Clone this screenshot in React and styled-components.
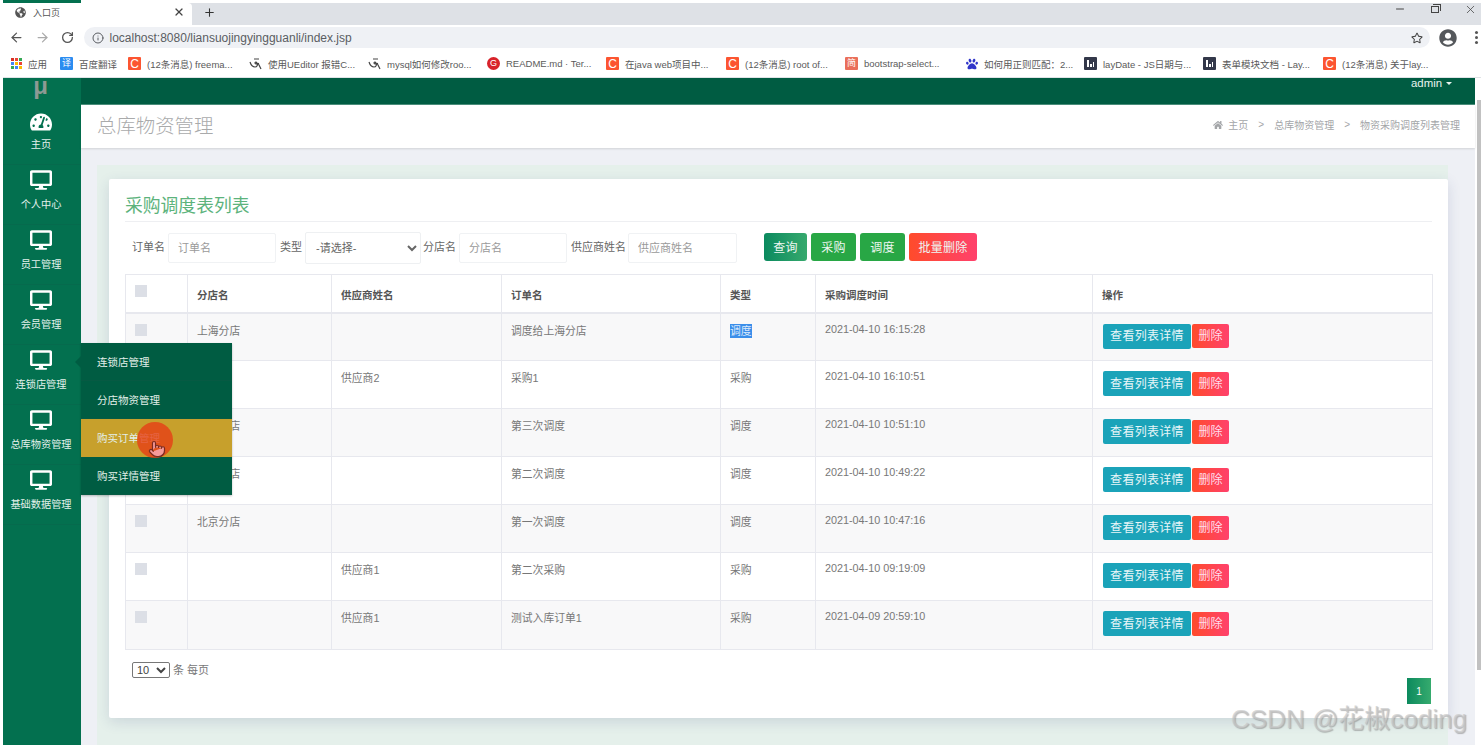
import React from "react";
import styled, { createGlobalStyle } from "styled-components";
import { FaTachometerAlt, FaDesktop, FaHome, FaPaw, FaGlobeAmericas, FaUserCircle, FaRegStar } from "react-icons/fa";
import { ArrowLeft, ArrowRight, RotateCw, Info, Plus, X, Minus, Pointer } from "lucide-react";

const Global = createGlobalStyle`
  html, body { margin: 0; padding: 0; background: #fff; overflow: hidden; }
  * { box-sizing: border-box; }
  body { font-family: "Liberation Sans", "Noto Sans CJK SC", sans-serif; }
`;

const Frame = styled.div`
  width: 1478px; height: 745px; margin-left: 3px; display: flex; flex-direction: column; overflow: hidden; position: relative; background: #fff;
`;
const Sliver = styled.div`height: 3px; width: 78px; background: #03704f; flex: none;`;
const TabStrip = styled.div`height: 22px; flex: none; display: flex; align-items: stretch; background: #dee1e6;`;
const Tab = styled.div`
  width: 189px; background: #fff; display: flex; align-items: center; padding: 0 7px 4px 12px; color: #555; font-size: 9px; gap: 7px; border-top-right-radius: 4px;
  span { flex: 1; }
`;
const NewTab = styled.div`width: 34px; display: flex; align-items: center; justify-content: center; color: #333; padding-bottom: 4px;`;
const WindowControls = styled.div`margin-left: auto; display: flex; align-items: flex-start; color: #444; gap: 25px; padding-right: 4px;`;
const RestoreIcon = styled.div`
  width: 8px; height: 7px; border: 1px solid #444; margin-top: 3px; position: relative;
  &::after { content: ""; position: absolute; left: 1px; top: -3px; width: 7px; height: 6px; border: 1px solid #444; border-left: 0; border-bottom: 0; }
`;
const Toolbar = styled.div`height: 25px; flex: none; display: flex; align-items: center; padding-left: 1px; background: #fff; color: #555;`;
const NavBtn = styled.div`width: 25.5px; display: flex; justify-content: center; color: ${p => p.$dim ? "#aaa" : "#555"};`;
const Address = styled.div`
  margin-left: 3px; width: 1346px; height: 21px; border-radius: 11px; background: #eff1f5; display: flex; align-items: center; padding: 0 7px 0 8px; gap: 6px; font-size: 12px; color: #5a5d62;
  span { flex: 1; }
`;
const Avatar = styled.div`margin-left: 3px; width: 30px; display: flex; justify-content: center; color: #55585c;`;
const Dots = styled.div`
  width: 3px; height: 3px; margin-left: 12px; border-radius: 50%; background: #555; box-shadow: 0 -5px #555, 0 5px #555;
`;
const BookmarkBar = styled.div`height: 28px; flex: none; display: flex; align-items: center; padding-left: 8px; background: #fff; border-bottom: 1px solid #dfe3e6;`;
const Bookmark = styled.div`
  width: ${p => p.$w}px; flex: none; display: flex; align-items: center; gap: 6px; font-size: 9.5px; color: #5a5a5a; white-space: nowrap; overflow: hidden;
`;
const Favicon = styled.div`
  width: 13px; height: 13px; flex: none; display: flex; align-items: center; justify-content: center; color: #fff; border-radius: ${p => p.$round ? "50%" : "1px"}; background: ${p => p.$bg}; font-size: ${p => p.$fs || 11}px; line-height: 1;
`;
const Body = styled.div`flex: 1; display: flex; position: relative; min-height: 0;`;
const Sidebar = styled.div`width: 78px; flex: none; background: #03704f; display: flex; flex-direction: column;`;
const Logo = styled.div`height: 27px; flex: none; padding-right: 3px; text-align: center; color: #8c9a94; font-size: 24px; font-weight: bold; line-height: 15px;`;
const NavItem = styled.div`
  height: 60px; flex: none; display: flex; flex-direction: column; align-items: center; padding: ${p => p.$pt}px 2px 0 0; color: #fff; font-size: 10.2px; border-bottom: 1px solid #066a4d;
  svg { display: block; flex: none; }
`;
const NavLabel = styled.div`line-height: 14px; color: #e4f1ec; white-space: nowrap; margin-top: ${p => p.$mt}px;`;
const MainCol = styled.div`flex: 1; min-width: 0; display: flex; flex-direction: column;`;
const TopBar = styled.div`
  height: 27px; flex: none; background: #005c42; border-bottom: 1px solid #4b8f7b; display: flex; justify-content: flex-end; padding: 0 23px 0 0; color: #e8f3ef; font-size: 11.4px; line-height: 10px;
`;
const Caret = styled.span`
  display: inline-block; width: 0; height: 0; margin: 0 0 2px 4px; border: 3px solid transparent; border-top-color: #e8f3ef; border-bottom: 0;
`;
const PageHead = styled.div`
  height: 43px; flex: none; background: #fff; display: flex; align-items: center; justify-content: space-between; padding: 0 15px 4px 16px; box-shadow: 0 1px 2px rgba(0,0,0,.12); position: relative;
`;
const PageTitle = styled.div`font-size: 19.4px; color: #a9aaab; font-weight: 300;`;
const Crumbs = styled.div`display: flex; align-items: center; font-size: 10px; color: #a3a5a8; gap: 5px;`;
const CrumbSep = styled.span`margin: 0 5px; font-size: 10px;`;
const Canvas = styled.div`flex: 1; background: #eef0f5; padding: 17px 27px 0 16px; min-height: 0;`;
const Tint = styled.div`height: 100%; width: 1351px; background: #e5f0eb; padding: 14px 12px 27px;`;
const Card = styled.div`
  background: #fff; width: 1339px; height: 539px; padding: 14px 16px 0; box-shadow: 0 4px 14px rgba(40,60,120,.14); border-radius: 2px;
`;
const CardTitle = styled.div`
  height: 29px; font-size: 17.8px; line-height: 26px; color: #5cb37c; border-bottom: 1px solid #eeeff2;
`;
const Filters = styled.div`
  display: flex; align-items: center; height: 52px; padding: 0 0 0 7px; font-size: 11px; color: #666;
`;
const FilterLabel = styled.label`margin: -4px ${p => p.$mr ?? 3}px 0 ${p => p.$ml || 0}px; white-space: nowrap;`;
const TextInput = styled.input`
  width: ${p => p.$w}px; height: 30px; border: 1px solid #f0f2f4; border-radius: 2px; padding: 0 9px; font: inherit; background: #fff; outline: 0;
  &::placeholder { color: #9a9a9a; opacity: 1; }
`;
const Select = styled.select`
  width: 116px; height: 32px; border: 1px solid #eef0f2; border-radius: 2px; padding: 0 6px; font: inherit; color: #666; background: #fff; outline: 0;
`;
const BtnRow = styled.div`display: flex; gap: 4px; margin-left: 27px; margin-top: -2px;`;
const ActionBtn = styled.div`
  width: ${p => p.$w}px; height: ${p => p.$h || 28}px; border-radius: 3px; color: #eef7f2; background: ${p => p.$bg}; display: flex; align-items: center; justify-content: center; font-size: 12px; letter-spacing: .3px; padding-bottom: 2px;
`;
const Table = styled.table`
  border-collapse: collapse; table-layout: fixed; width: 1307px; font-size: 10.8px; color: #777; border: 1px solid #e7e8ee;
  th, td { border: 1px solid #e7e8ee; text-align: left; vertical-align: top; padding: 0 0 0 9px; }
  th { height: 38px; padding-top: 13px; color: #555; font-weight: bold; font-size: 10.5px; border-bottom-width: 2px; line-height: 14px; }
  td { padding-top: 10px; line-height: 14px; }
  tbody tr:nth-child(odd) { background: #f8f8f9; }
`;
const HeadCheckCell = styled.th`&& { padding-top: 0; }`;
const DateCell = styled.td`&& { padding-top: 8px; }`;
const Row = styled.tr`height: ${p => p.$h}px;`;
const Check = styled.div`width: 12px; height: 12px; background: #dcdfe6; margin-top: ${p => p.$mt}px;`;
const Selected = styled.span`background: #3b8eea; color: #dbe9fb; display: inline-block;`;
const OpCell = styled.div`display: flex; align-items: center; gap: 1px; padding-left: 1px;`;
const DetailBtn = styled.div`width: 88px; height: 25px; border-radius: 2px; background: #1ba3b9; color: #e8f6f8; font-size: 12px; display: flex; align-items: center; justify-content: center; letter-spacing: .3px;`;
const DelBtn = styled.div`width: 37px; height: 24px; border-radius: 2px; background: linear-gradient(90deg, #ff4b2b, #ff416c); color: #fde; font-size: 12px; display: flex; align-items: center; justify-content: center;`;
const Pager = styled.div`display: flex; justify-content: space-between; padding: 12px 1px 0 7px;`;
const PageSize = styled.div`display: flex; align-items: flex-start; gap: 3px; font-size: 11px; color: #777; line-height: 16px;`;
const SizeSelect = styled.select`width: 38px; height: 16px; font-size: 11px; font-family: inherit; padding: 0; border: 1px solid #777; border-radius: 2px; background: #fff; color: #444;`;
const PageBtn = styled.div`
  width: 24px; height: 26px; margin-top: 16px; background: linear-gradient(90deg, #0c8a5e, #36ab6e); color: #fff; font-size: 10px; display: flex; align-items: center; justify-content: center;
`;
const Scroll = styled.div`width: 4px; flex: none; background: #fff; display: flex; flex-direction: column; margin-left: 2px;`;
const Thumb = styled.div`margin-top: 22px; height: 570px; background: #c1c1c1; flex: none;`;
const Flyout = styled.div`
  position: absolute; left: 78px; top: 265px; width: 151px; background: #005c42; box-shadow: 0 1px 2px rgba(0,0,0,.25);
  &::before { content: ""; position: absolute; left: -6px; top: 13px; border: 6px solid transparent; border-left: 0; border-right-color: #005c42; }
`;
const FlyItem = styled.div`
  height: 38px; padding-left: 16px; display: flex; align-items: center; font-size: 10.5px; color: #e3efe9; background: ${p => p.$active ? "#c7a02c" : "transparent"}; border-bottom: 1px solid ${p => p.$active ? "transparent" : "#075a43"};
`;
const ClickDot = styled.div`
  position: absolute; left: 134px; top: 344px; width: 36px; height: 36px; border-radius: 50%; background: rgba(230,62,22,.8); display: flex; align-items: flex-end; justify-content: center; padding: 0 0 0 4px;
  svg { display: block; }
`;
const Watermark = styled.div`
  position: absolute; left: 1228px; top: 703px; font-size: 26px; line-height: 32px; color: rgba(200,200,200,.7); text-shadow: 1px 1px 1px rgba(120,120,120,.5); white-space: nowrap; font-family: "Liberation Sans", "Noto Sans CJK SC", sans-serif;
`;

const Apps = () => (
  <svg width="11" height="11" viewBox="0 0 11 11">
    {[["#d93025","#ea4335","#34a853"],["#4285f4","#fbbc04","#ea4335"],["#34a853","#4285f4","#fbbc04"]].map((r, y) =>
      r.map((c, x) => <rect key={x + "-" + y} x={x * 4} y={y * 4} width="3" height="3" fill={c} />))}
  </svg>
);
const Squiggle = () => (
  <svg width="13" height="13" viewBox="0 0 13 13" fill="none" stroke="#444" strokeWidth="1.2">
    <path d="M1 5c1 3 3 5 5 5 2 0 3-2 2-4-.6-1.2-2-1-2 0 0 1.4 3 1 4 .5M5 2h5M9 6c1 2 2 4 3 6" />
  </svg>
);
const LayIcon = () => (
  <svg width="9" height="9" viewBox="0 0 9 9" fill="#fff"><rect x="1" y="1" width="2" height="7" /><rect x="4" y="5" width="2" height="3" /><rect x="7" y="3" width="1" height="5" /></svg>
);

const C = () => <Favicon $bg="#fc5531" $fs={12}>C</Favicon>;
const L = () => <Favicon $bg="#33384a"><LayIcon /></Favicon>;
const bookmarks = [
  [<Apps />, "应用", 49], [<Favicon $bg="#2b8cf0" $fs={9}>译</Favicon>, "百度翻译", 68],
  [<C />, "(12条消息) freema...", 121], [<Squiggle />, "使用UEditor 报错C...", 119], [<Squiggle />, "mysql如何修改roo...", 119],
  [<Favicon $bg="#d8232a" $round $fs={9}>G</Favicon>, "README.md · Ter...", 119], [<C />, "在java web项目中...", 120],
  [<C />, "(12条消息) root of...", 119], [<Favicon $bg="#ea6f5a" $fs={9}>简</Favicon>, "bootstrap-select...", 120],
  [<Favicon $bg="transparent"><FaPaw color="#3035c9" size={12} /></Favicon>, "如何用正则匹配：2...", 119],
  [<L />, "layDate - JS日期与...", 119], [<L />, "表单模块文档 - Lay...", 120], [<C />, "(12条消息) 关于lay...", 120],
];
const nav = [[FaTachometerAlt, "主页", 6, 5], [FaDesktop, "个人中心", 4, 7], [FaDesktop, "员工管理", 4, 7], [FaDesktop, "会员管理", 4, 7], [FaDesktop, "连锁店管理", 4, 7], [FaDesktop, "总库物资管理", 4, 7], [FaDesktop, "基础数据管理", 4, 7]];
const rows = [
  ["上海分店", "", "调度给上海分店", "调度", "2021-04-10 16:15:28", 48],
  ["", "供应商2", "采购1", "采购", "2021-04-10 16:10:51", 48],
  ["南京分店", "", "第三次调度", "调度", "2021-04-10 10:51:10", 48],
  ["南京分店", "", "第二次调度", "调度", "2021-04-10 10:49:22", 48],
  ["北京分店", "", "第一次调度", "调度", "2021-04-10 10:47:16", 48],
  ["", "供应商1", "第二次采购", "采购", "2021-04-10 09:19:09", 48],
  ["", "供应商1", "测试入库订单1", "采购", "2021-04-09 20:59:10", 49],
];
const widths = [62, 144, 170, 219, 95, 277, 340];

export default function App() {
  return (
    <>
      <Global />
      <Frame>
        <Sliver />
        <TabStrip>
          <Tab><FaGlobeAmericas size={11} color="#555" /><span>入口页</span><X size={12} strokeWidth={2.4} color="#444" /></Tab>
          <NewTab><Plus size={13} strokeWidth={2} /></NewTab>
          <WindowControls><Minus size={12} /><RestoreIcon /><X size={13} strokeWidth={1.4} /></WindowControls>
        </TabStrip>
        <Toolbar>
          <NavBtn><ArrowLeft size={15} /></NavBtn>
          <NavBtn $dim><ArrowRight size={15} /></NavBtn>
          <NavBtn><RotateCw size={13} strokeWidth={2.4} /></NavBtn>
          <Address><Info size={12} /><span>localhost:8080/liansuojingyingguanli/index.jsp</span><FaRegStar size={12} color="#444" /></Address>
          <Avatar><FaUserCircle size={18} /></Avatar>
          <Dots />
        </Toolbar>
        <BookmarkBar>
          {bookmarks.map(([icon, text, w], i) => <Bookmark key={i} $w={w}>{icon}<span>{text}</span></Bookmark>)}
        </BookmarkBar>
        <Body>
          <Sidebar>
            <Logo>μ</Logo>
            {nav.map(([Icon, label, pt, mt]) => (
              <NavItem key={label} $pt={pt}><Icon size={22} /><NavLabel $mt={mt}>{label}</NavLabel></NavItem>
            ))}
          </Sidebar>
          <MainCol>
            <TopBar><span>admin<Caret /></span></TopBar>
            <PageHead>
              <PageTitle>总库物资管理</PageTitle>
              <Crumbs><FaHome size={10} /><span>主页</span><CrumbSep>&gt;</CrumbSep><span>总库物资管理</span><CrumbSep>&gt;</CrumbSep><span>物资采购调度列表管理</span></Crumbs>
            </PageHead>
            <Canvas>
              <Tint>
                <Card>
                  <CardTitle>采购调度表列表</CardTitle>
                  <Filters>
                    <FilterLabel>订单名</FilterLabel><TextInput $w={108} placeholder="订单名" readOnly />
                    <FilterLabel $ml={4}>类型</FilterLabel><Select defaultValue=""><option value="">-请选择-</option></Select>
                    <FilterLabel $ml={2}>分店名</FilterLabel><TextInput $w={108} placeholder="分店名" readOnly />
                    <FilterLabel $ml={4} $mr={2}>供应商姓名</FilterLabel><TextInput $w={109} placeholder="供应商姓名" readOnly />
                    <BtnRow>
                      <ActionBtn $w={43} $bg="linear-gradient(90deg,#0b8a5f,#36a96d)">查询</ActionBtn>
                      <ActionBtn $w={45} $bg="#28a745">采购</ActionBtn>
                      <ActionBtn $w={45} $bg="#28a745">调度</ActionBtn>
                      <ActionBtn $w={68} $bg="linear-gradient(90deg,#ff4b2b,#ff416c)">批量删除</ActionBtn>
                    </BtnRow>
                  </Filters>
                  <Table>
                    <colgroup>{widths.map((w, i) => <col key={i} width={w} />)}</colgroup>
                    <thead>
                      <tr>
                        <HeadCheckCell><Check $mt={10} /></HeadCheckCell>
                        <th>分店名</th><th>供应商姓名</th><th>订单名</th><th>类型</th><th>采购调度时间</th><th>操作</th>
                      </tr>
                    </thead>
                    <tbody>
                      {rows.map((r, i) => (
                        <Row key={i} $h={r[5]}>
                          <td><Check $mt={0} /></td>
                          <td>{r[0]}</td><td>{r[1]}</td><td>{r[2]}</td>
                          <td>{i === 0 ? <Selected>{r[3]}</Selected> : r[3]}</td>
                          <DateCell>{r[4]}</DateCell>
                          <td><OpCell><DetailBtn>查看列表详情</DetailBtn><DelBtn>删除</DelBtn></OpCell></td>
                        </Row>
                      ))}
                    </tbody>
                  </Table>
                  <Pager>
                    <PageSize><SizeSelect defaultValue="10"><option>10</option></SizeSelect><span>条 每页</span></PageSize>
                    <PageBtn>1</PageBtn>
                  </Pager>
                </Card>
              </Tint>
            </Canvas>
          </MainCol>
          <Scroll><Thumb /></Scroll>
          <Flyout>
            <FlyItem>连锁店管理</FlyItem>
            <FlyItem>分店物资管理</FlyItem>
            <FlyItem $active>购买订单管理</FlyItem>
            <FlyItem>购买详情管理</FlyItem>
          </Flyout>
          <ClickDot><Pointer size={18} fill="#f59a9a" color="#7a2a20" strokeWidth={1.6} /></ClickDot>
        </Body>
        <Watermark>CSDN @花椒coding</Watermark>
      </Frame>
    </>
  );
}
